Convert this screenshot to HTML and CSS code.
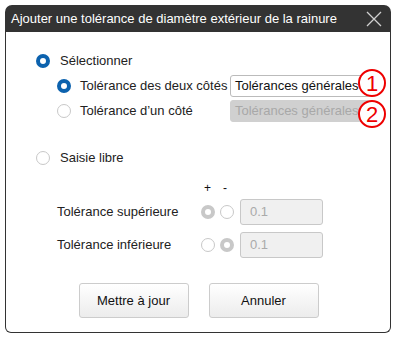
FILE: index.html
```html
<!DOCTYPE html>
<html>
<head>
    <title>Tolérance de rainure</title>
    <link rel="stylesheet" href="styles.css">
</head>
<body>
    <div class="dialog">
        <div class="titlebar">
            <span class="title">Ajouter une tolérance de diamètre extérieur de la rainure</span>
            <svg class="close" width="16" height="16" viewBox="0 0 16 16">
                <path d="M1 1 L15 15 M15 1 L1 15" stroke="#d0d0d0" stroke-width="1.3" fill="none"/>
            </svg>
        </div>
        <div class="body">
            <!-- Sélectionner -->
            <div class="row lvl1">
                <span class="radio checked"></span>
                <span>Sélectionner</span>
            </div>
            <div class="row lvl2">
                <span class="radio checked"></span>
                <span class="label-wide">Tolérance des deux côtés</span>
                <div class="select">Tolérances générales</div>
                <span class="badge badge-1">1</span>
            </div>
            <div class="row lvl2">
                <span class="radio"></span>
                <span class="label-wide">Tolérance d’un côté</span>
                <div class="select disabled">Tolérances générales</div>
                <span class="badge badge-2">2</span>
            </div>

            <!-- Saisie libre -->
            <div class="row lvl1 free">
                <span class="radio"></span>
                <span>Saisie libre</span>
            </div>
            <div class="signs">
                <span>+</span>
                <span>-</span>
            </div>
            <div class="tol-row">
                <span class="tol-label">Tolérance supérieure</span>
                <span class="radio off-checked"></span>
                <span class="radio off"></span>
                <div class="input">0.1</div>
            </div>
            <div class="tol-row">
                <span class="tol-label">Tolérance inférieure</span>
                <span class="radio off"></span>
                <span class="radio off-checked"></span>
                <div class="input">0.1</div>
            </div>

            <div class="buttons">
                <button>Mettre à jour</button>
                <button>Annuler</button>
            </div>
        </div>
    </div>
</body>
</html>
```
FILE: styles.css
```css
body { margin: 0; background: #fff; font-family: "Liberation Sans", Arial, sans-serif; font-size: 13px; color: #222; }
.dialog { margin: 5px 0 0 5px; width: 386px; height: 328px; display: flex; flex-direction: column; }
.titlebar { height: 27px; background: #333; border-radius: 7px 7px 0 0; display: flex; align-items: center; padding: 0 9px 0 6px; }
.title { color: #fff; flex: 1; }
.close { display: block; }
.body { flex: 1; position: relative; border: 1px solid #333; border-top: none; border-radius: 0 0 6px 6px; padding-top: 16px; }
.row { height: 25px; display: flex; align-items: center; }
.lvl1 { padding-left: 30px; }
.lvl1 .radio { margin-right: 10px; }
.lvl2 { padding-left: 51px; }
.lvl2 .radio { margin-right: 9px; }
.label-wide { width: 150px; }
.free { margin-top: 22px; }
.radio { width: 14px; height: 14px; border-radius: 50%; box-sizing: border-box; border: 1px solid #c8c8c8; background: #fff; flex: none; }
.radio.checked { border: 4px solid #0c62ae; }
.radio.off { border-color: #c8c8c8; }
.radio.off-checked { border: 4px solid #c8c8c8; }
.select { width: 140px; height: 22px; box-sizing: border-box; border: 1px solid #bbb; border-radius: 3px; padding-left: 4px; line-height: 20px; white-space: nowrap; overflow: hidden; color: #111; }
.select.disabled { background: #d0d0d0; border-color: #d0d0d0; color: #a8a8a8; }
.badge { position: absolute; left: 352px; width: 24px; height: 24px; border: 2px solid #e00; border-radius: 50%; background: #fff; color: #e00; font-size: 22px; line-height: 25px; text-align: center; }
.badge-1 { top: 37px; }
.badge-2 { top: 68px; }
.signs { height: 14px; margin-top: 11px; padding-left: 198px; display: flex; gap: 12px; font-size: 12px; line-height: 14px; color: #111; }
.tol-row { height: 33px; display: flex; align-items: center; padding-left: 51px; }
.tol-label { width: 144px; }
.tol-row .radio { margin-right: 5px; }
.input { width: 83px; height: 26px; box-sizing: border-box; margin-left: 1px; border: 1px solid #c8c8c8; border-radius: 3px; background: #f0f0f0; color: #aaa; padding-left: 9px; line-height: 24px; }
.buttons { display: flex; justify-content: center; gap: 20px; margin-top: 22px; padding-left: 1px; }
button { width: 110px; height: 35px; border: 1px solid #ccc; border-radius: 3px; background: linear-gradient(#fff, #ececec); font-family: inherit; font-size: 13px; color: #111; }
```
